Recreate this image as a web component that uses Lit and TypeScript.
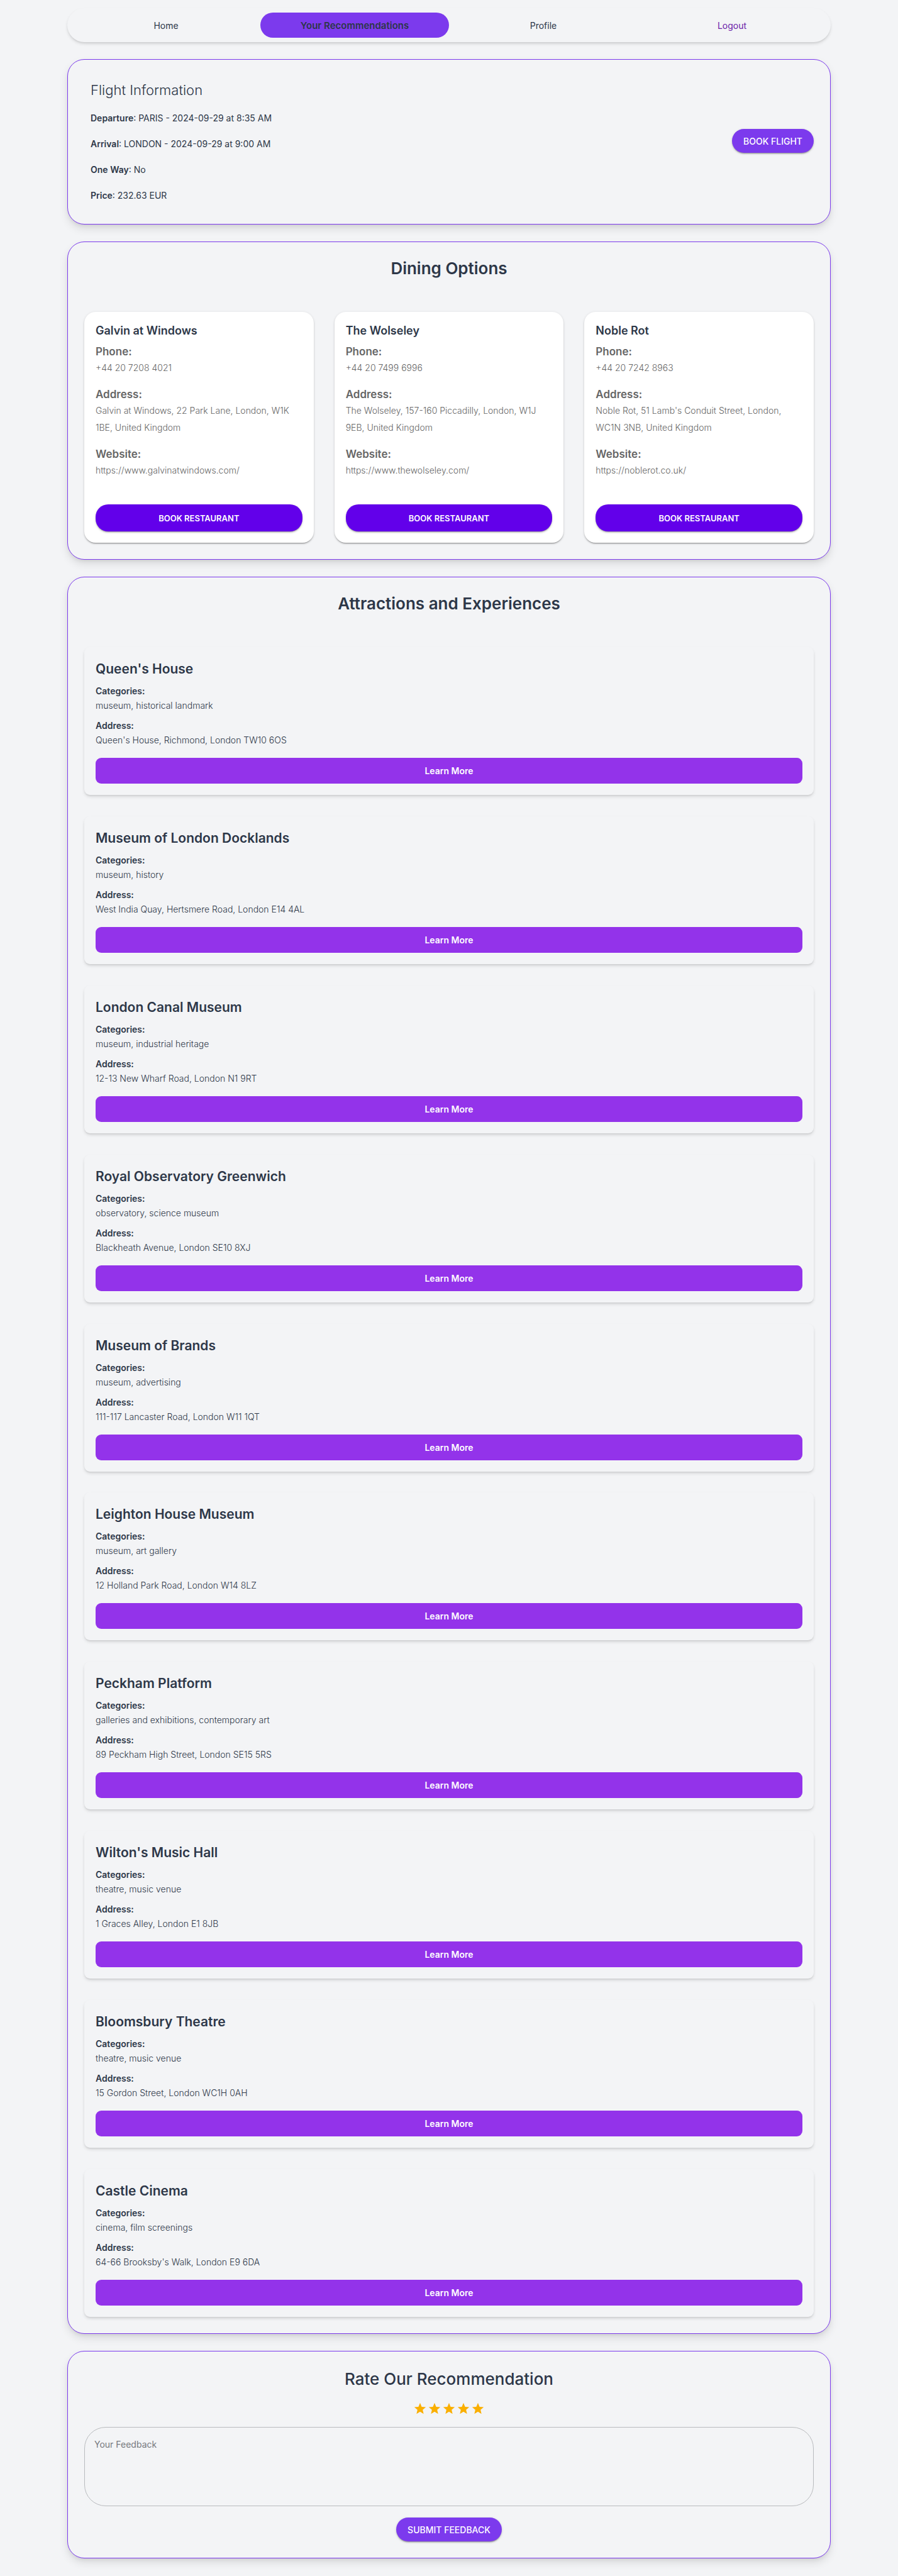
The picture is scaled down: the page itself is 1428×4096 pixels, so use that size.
import { LitElement, html, css } from 'lit';
import { customElement, property, state } from 'lit/decorators.js';
import { classMap } from 'lit/directives/class-map.js';

interface Restaurant {
  name: string;
  phone: string;
  address: string;
  website: string;
}

interface Attraction {
  name: string;
  categories: string;
  address: string;
}

const NAV = ['Home', 'Your Recommendations', 'Profile', 'Logout'];

const FLIGHT: [string, string][] = [
  ['Departure', 'PARIS - 2024-09-29 at 8:35 AM'],
  ['Arrival', 'LONDON - 2024-09-29 at 9:00 AM'],
  ['One Way', 'No'],
  ['Price', '232.63 EUR'],
];

const RESTAURANTS: Restaurant[] = [
  {
    name: 'Galvin at Windows',
    phone: '+44 20 7208 4021',
    address: 'Galvin at Windows, 22 Park Lane, London, W1K 1BE, United Kingdom',
    website: 'https://www.galvinatwindows.com/',
  },
  {
    name: 'The Wolseley',
    phone: '+44 20 7499 6996',
    address: 'The Wolseley, 157-160 Piccadilly, London, W1J 9EB, United Kingdom',
    website: 'https://www.thewolseley.com/',
  },
  {
    name: 'Noble Rot',
    phone: '+44 20 7242 8963',
    address: "Noble Rot, 51 Lamb's Conduit Street, London, WC1N 3NB, United Kingdom",
    website: 'https://noblerot.co.uk/',
  },
];

const ATTRACTIONS: Attraction[] = [
  { name: "Queen's House", categories: 'museum, historical landmark', address: "Queen's House, Richmond, London TW10 6OS" },
  { name: 'Museum of London Docklands', categories: 'museum, history', address: 'West India Quay, Hertsmere Road, London E14 4AL' },
  { name: 'London Canal Museum', categories: 'museum, industrial heritage', address: '12-13 New Wharf Road, London N1 9RT' },
  { name: 'Royal Observatory Greenwich', categories: 'observatory, science museum', address: 'Blackheath Avenue, London SE10 8XJ' },
  { name: 'Museum of Brands', categories: 'museum, advertising', address: '111-117 Lancaster Road, London W11 1QT' },
  { name: 'Leighton House Museum', categories: 'museum, art gallery', address: '12 Holland Park Road, London W14 8LZ' },
  { name: 'Peckham Platform', categories: 'galleries and exhibitions, contemporary art', address: '89 Peckham High Street, London SE15 5RS' },
  { name: "Wilton's Music Hall", categories: 'theatre, music venue', address: '1 Graces Alley, London E1 8JB' },
  { name: 'Bloomsbury Theatre', categories: 'theatre, music venue', address: '15 Gordon Street, London WC1H 0AH' },
  { name: 'Castle Cinema', categories: 'cinema, film screenings', address: "64-66 Brooksby's Walk, London E9 6DA" },
];

const base = css`
  * {
    box-sizing: border-box;
    margin: 0;
  }
  button {
    border: none;
    font-family: inherit;
    color: #fff;
    cursor: pointer;
  }
`;

@customElement('restaurant-card')
export class RestaurantCard extends LitElement {
  @property({ attribute: false }) restaurant!: Restaurant;

  static styles = [
    base,
    css`
      :host {
        display: flex;
      }
      .card {
        flex: 1;
        display: flex;
        flex-direction: column;
        padding: 18px;
        border-radius: 18px;
        background: #fff;
        color: #666;
        box-shadow: 0 2px 1px -1px rgba(0, 0, 0, 0.2), 0 2px 2px rgba(0, 0, 0, 0.14),
          0 1px 4px rgba(0, 0, 0, 0.12);
      }
      .name,
      .label {
        font-size: 17px;
        font-weight: 600;
        line-height: 24px;
      }
      .name {
        color: #2d3748;
        font-size: 18px;
        margin-bottom: 9px;
      }
      .value {
        font-size: 14px;
        font-weight: 300;
        line-height: 27px;
        margin-bottom: 17px;
      }
      .value:last-child {
        margin-bottom: 0;
      }
      .details {
        margin-bottom: 41px;
      }
      .book {
        margin-top: auto;
        min-height: 43px;
        border-radius: 20px;
        background: #6200ea;
        font-size: 13px;
        font-weight: 600;
        box-shadow: 0 2px 1px -1px rgba(0, 0, 0, 0.2), 0 2px 2px rgba(0, 0, 0, 0.14),
          0 1px 4px rgba(0, 0, 0, 0.12);
      }
    `,
  ];

  render() {
    const r = this.restaurant;
    return html`
      <article class="card">
        <h3 class="name">${r.name}</h3>
        <div class="details">
          <h4 class="label">Phone:</h4>
          <p class="value">${r.phone}</p>
          <h4 class="label">Address:</h4>
          <p class="value">${r.address}</p>
          <h4 class="label">Website:</h4>
          <p class="value">${r.website}</p>
        </div>
        <button class="book" type="button">BOOK RESTAURANT</button>
      </article>
    `;
  }
}

@customElement('attraction-card')
export class AttractionCard extends LitElement {
  @property({ attribute: false }) attraction!: Attraction;

  static styles = [
    base,
    css`
      :host {
        display: block;
      }
      .card {
        display: flex;
        flex-direction: column;
        padding: 18px;
        border-radius: 9px;
        background: #f3f4f6;
        box-shadow: 0 3px 5px rgba(0, 0, 0, 0.1), 0 2px 3px -1px rgba(0, 0, 0, 0.1);
      }
      .name {
        font-size: 21px;
        font-weight: 600;
        line-height: 34px;
        margin-bottom: 6px;
      }
      .label,
      .value {
        font-size: 14px;
        line-height: 23px;
      }
      .label {
        font-weight: 600;
      }
      .value {
        font-weight: 300;
        margin-bottom: 9px;
      }
      .value.last {
        margin-bottom: 17px;
      }
      .more {
        min-height: 41px;
        border-radius: 9px;
        background: #9333ea;
        font-size: 14px;
        font-weight: 600;
      }
    `,
  ];

  render() {
    const a = this.attraction;
    return html`
      <article class="card">
        <h3 class="name">${a.name}</h3>
        <p class="label">Categories:</p>
        <p class="value">${a.categories}</p>
        <p class="label">Address:</p>
        <p class="value last">${a.address}</p>
        <button class="more" type="button">Learn More</button>
      </article>
    `;
  }
}

@customElement('app-root')
export class AppRoot extends LitElement {
  @state() private rating = 5;

  static styles = [
    base,
    css`
      :host {
        display: flex;
        flex-direction: column;
        gap: 27px;
        box-sizing: border-box;
        min-height: 100vh;
        padding: 13px 107px 28px;
        background: #f3f4f6;
        color: #2d3748;
        font-family: Inter, 'Liberation Sans', sans-serif;
        font-size: 14px;
      }
      .nav {
        display: grid;
        grid-template-columns: repeat(4, 1fr);
        padding: 7px;
        border-radius: 27px;
        box-shadow: 0 3px 5px rgba(0, 0, 0, 0.1), 0 2px 3px -1px rgba(0, 0, 0, 0.1);
        background: #f3f4f6;
      }
      .link {
        display: flex;
        align-items: center;
        justify-content: center;
        min-height: 40px;
        border-radius: 20px;
        color: inherit;
        font-size: 14px;
        text-decoration: none;
      }
      .link.active {
        background: #7c3aed;
        font-size: 15px;
        font-weight: 600;
      }
      .link.logout {
        color: #6b21a8;
      }
      .panel {
        border: 1px solid #7c3aed;
        border-radius: 27px;
        padding: 24px 26px 26px;
        background: #f3f4f6;
        box-shadow: 0 7px 14px rgba(0, 0, 0, 0.1), 0 3px 6px -2px rgba(0, 0, 0, 0.1);
      }
      .title {
        font-size: 26px;
        font-weight: 600;
        line-height: 36px;
        text-align: center;
        margin-bottom: 51px;
      }
      .flight {
        display: flex;
        align-items: center;
        justify-content: space-between;
        padding: 31px 26px 34px 36px;
      }
      .flight-title {
        font-size: 22px;
        font-weight: 300;
        line-height: 34px;
        margin-bottom: 16px;
      }
      .rows {
        display: flex;
        flex-direction: column;
        gap: 18px;
        line-height: 23px;
      }
      .rows strong {
        font-weight: 600;
      }
      .pill {
        min-height: 38px;
        padding: 0 18px;
        border-radius: 19px;
        background: #7c3aed;
        font-size: 14px;
        font-weight: 500;
        box-shadow: 0 2px 1px -1px rgba(0, 0, 0, 0.2), 0 2px 2px rgba(0, 0, 0, 0.14),
          0 1px 4px rgba(0, 0, 0, 0.12);
      }
      .restaurants {
        display: grid;
        grid-template-columns: repeat(3, 1fr);
        gap: 33px;
      }
      .attractions {
        flex: 1;
        display: flex;
        flex-direction: column;
      }
      .list {
        flex: 1;
        display: flex;
        flex-direction: column;
        justify-content: space-between;
        gap: 31px;
      }
      .rate {
        display: flex;
        flex-direction: column;
        align-items: center;
        gap: 18px;
        padding: 26px;
      }
      .rate .title {
        font-weight: 500;
        margin: 0;
      }
      .stars {
        display: flex;
        gap: 1px;
        padding: 0;
        border: none;
      }
      .star {
        position: relative;
        display: flex;
        color: #d1d5db;
        cursor: pointer;
      }
      .star.on {
        color: #faaf00;
      }
      .star input {
        position: absolute;
        inset: 0;
        margin: 0;
        opacity: 0;
        cursor: pointer;
      }
      .star svg {
        width: 22px;
        height: 22px;
        fill: currentColor;
      }
      .feedback {
        display: block;
        width: 100%;
        height: 126px;
        padding: 17px 15px;
        border: 1px solid #b9bbbe;
        border-radius: 34px;
        background: transparent;
        color: inherit;
        font: inherit;
        line-height: 20px;
        resize: none;
      }
      .feedback::placeholder {
        color: #76797e;
        opacity: 1;
      }
    `,
  ];

  render() {
    return html`
      <nav class="nav">
        ${NAV.map(
          (n, i) => html`<a
            class=${classMap({ link: true, active: i === 1, logout: n === 'Logout' })}
            href="#"
            >${n}</a
          >`,
        )}
      </nav>

      <section class="panel flight">
        <div>
          <h2 class="flight-title">Flight Information</h2>
          <div class="rows">
            ${FLIGHT.map(([label, value]) => html`<p><strong>${label}</strong>: ${value}</p>`)}
          </div>
        </div>
        <button class="pill" type="button">BOOK FLIGHT</button>
      </section>

      <section class="panel">
        <h2 class="title">Dining Options</h2>
        <div class="restaurants">
          ${RESTAURANTS.map((r) => html`<restaurant-card .restaurant=${r}></restaurant-card>`)}
        </div>
      </section>

      <section class="panel attractions">
        <h2 class="title">Attractions and Experiences</h2>
        <div class="list">
          ${ATTRACTIONS.map((a) => html`<attraction-card .attraction=${a}></attraction-card>`)}
        </div>
      </section>

      <section class="panel rate">
        <h2 class="title">Rate Our Recommendation</h2>
        <fieldset class="stars" aria-label="Rating">
          ${[1, 2, 3, 4, 5].map(
            (n) => html`<label class=${classMap({ star: true, on: n <= this.rating })}>
              <input
                type="radio"
                name="rating"
                aria-label=${`${n} stars`}
                .checked=${n === this.rating}
                @change=${() => (this.rating = n)}
              />
              <svg viewBox="0 0 24 24" aria-hidden="true">
                <path
                  d="M12 17.27 18.18 21l-1.64-7.03L22 9.24l-7.19-.61L12 2 9.19 8.63 2 9.24l5.46 4.73L5.82 21z"
                />
              </svg>
            </label>`,
          )}
        </fieldset>
        <textarea class="feedback" aria-label="Your Feedback" placeholder="Your Feedback"></textarea>
        <button class="pill" type="button">SUBMIT FEEDBACK</button>
      </section>
    `;
  }
}
